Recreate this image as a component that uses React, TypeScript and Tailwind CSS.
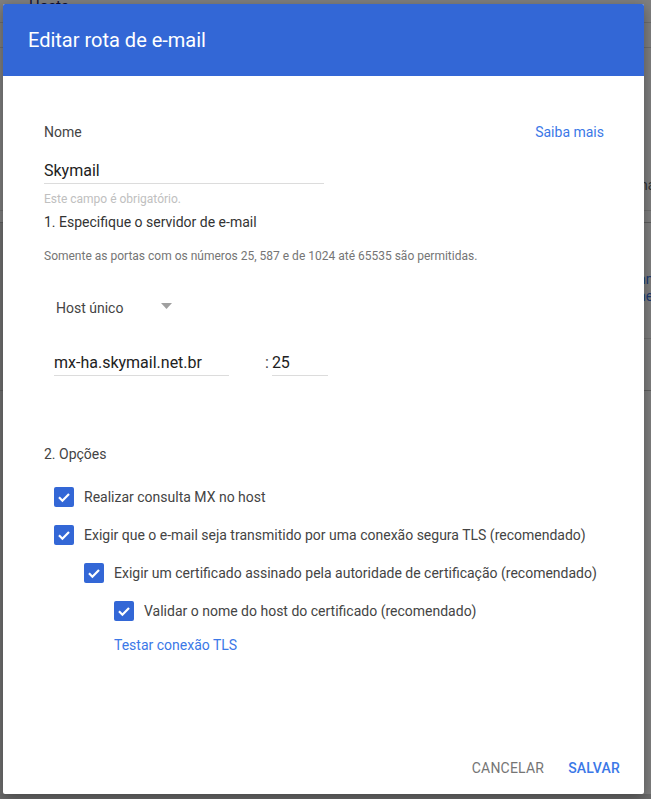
import React from "react";

const font = { fontFamily: "Roboto, 'Noto Sans', Arial, sans-serif" };

function Check({ ml }: { ml: string }) {
  return (
    <div
      className={`${ml} w-[20px] h-[20px] rounded-[2px] bg-[#3367d6] flex items-center justify-center shrink-0`}
    >
      <svg width="20" height="20" viewBox="0 0 20 20">
        <path d="M5 10.3l3.4 3.4 6.6-6.8" fill="none" stroke="#ffffff" strokeWidth="2.2" />
      </svg>
    </div>
  );
}

function CheckRow({
  ml,
  text,
  gap,
  mt,
}: {
  ml: string;
  text: string;
  gap: string;
  mt: string;
}) {
  return (
    <div className={`${mt} flex items-center h-[20px]`}>
      <Check ml={ml} />
      <span className={`${gap} text-[14px] leading-[20px] text-[#444444]`}>{text}</span>
    </div>
  );
}

export default function App() {
  return (
    <div className="relative w-[651px] h-[799px] bg-[#7f7f7f] overflow-hidden" style={font}>
      {/* dimmed page behind the overlay */}
      <div className="absolute inset-0">
        <div className="absolute left-[12px] top-[2px] text-[10px] leading-[10px] text-[#3a3a3a]">▸</div>
        <div className="absolute left-[29px] top-[-2px] text-[15px] leading-[16px] text-[#0f0f30]">Hosts</div>
        <div className="absolute left-[0px] top-[22px] w-[651px] h-px bg-[#6e6e6e]" />
        <div className="absolute left-[0px] top-[47px] w-[651px] h-px bg-[#6e6e6e]" />
        <div className="absolute left-[0px] top-[222px] w-[651px] h-px bg-[#5f5f5f]" />
        <div className="absolute left-[0px] top-[223px] w-[10px] h-[576px] bg-[#707070]" />
        <div className="absolute left-[640px] top-[176px] text-[14px] leading-[18px] text-[#333333]">na</div>
        <div className="absolute left-[0px] top-[210px] w-[651px] h-px bg-[#707070]" />
        <div className="absolute left-[638px] top-[270px] text-[14px] leading-[18px] text-[#1c3a70]">nm</div>
        <div className="absolute left-[638px] top-[287px] text-[14px] leading-[18px] text-[#1c3a70]">ne</div>
        <div className="absolute left-[0px] top-[338px] w-[651px] h-px bg-[#707070]" />
        <div className="absolute left-[0px] top-[390px] w-[651px] h-px bg-[#606060]" />
        <div className="absolute left-[0px] top-[794px] w-[651px] h-[5px] bg-[#6b6b6b]" />
      </div>

      {/* dialog */}
      <div className="absolute left-[3px] top-[4px] w-[641px] h-[790px] bg-white rounded-[2px] shadow-[0_4px_14px_rgba(0,0,0,0.35)] flex flex-col overflow-hidden">
        <div className="h-[72px] bg-[#3367d6] flex items-center pl-[25px] shrink-0">
          <span className="text-[20px] leading-[28px] text-white">Editar rota de e-mail</span>
        </div>

        <div className="flex-1 flex flex-col pl-[41px] pr-[40px]">
          <div className="mt-[46px] flex items-center justify-between h-[20px]">
            <span className="text-[14px] leading-[20px] text-[#444444]">Nome</span>
            <span className="text-[14px] leading-[20px] text-[#3b78e7]">Saiba mais</span>
          </div>

          <div className="mt-[17px] w-[280px] h-[25px] border-b border-[#dcdcdc]">
            <span className="text-[16px] leading-[24px] text-[#212121]">Skymail</span>
          </div>

          <div className="mt-[7px] text-[12px] leading-[16px] text-[#c0c0c0]">
            Este campo é obrigatório.
          </div>

          <div className="mt-[5px] text-[14px] leading-[20px] text-[#333333]">
            1. Especifique o servidor de e-mail
          </div>

          <div className="mt-[16px] text-[12px] leading-[16px] text-[#757575]">
            Somente as portas com os números 25, 587 e de 1024 até 65535 são permitidas.
          </div>

          <div className="mt-[34px] ml-[12px] w-[116px] h-[20px] flex items-center justify-between">
            <span className="text-[14px] leading-[20px] text-[#444444]">Host único</span>
            <svg width="11" height="6" viewBox="0 0 11 6" className="mb-[4px]">
              <path d="M0 0h11L5.5 6z" fill="#a0a0a0" />
            </svg>
          </div>

          <div className="mt-[33px] flex items-start">
            <div className="ml-[10px] w-[175px] h-[25px] border-b border-[#dcdcdc]">
              <span className="text-[16px] leading-[24px] text-[#212121]">mx-ha.skymail.net.br</span>
            </div>
            <span className="ml-[36px] text-[16px] leading-[24px] text-[#444444]">:</span>
            <div className="ml-[3px] w-[56px] h-[25px] border-b border-[#dcdcdc]">
              <span className="text-[16px] leading-[24px] text-[#212121]">25</span>
            </div>
          </div>

          <div className="mt-[68px] text-[14px] leading-[20px] text-[#444444]">2. Opções</div>

          <CheckRow mt="mt-[23px]" ml="ml-[10px]" gap="ml-[10px]" text="Realizar consulta MX no host" />
          <CheckRow
            mt="mt-[18px]"
            ml="ml-[10px]"
            gap="ml-[10px]"
            text="Exigir que o e-mail seja transmitido por uma conexão segura TLS (recomendado)"
          />
          <CheckRow
            mt="mt-[18px]"
            ml="ml-[40px]"
            gap="ml-[10px]"
            text="Exigir um certificado assinado pela autoridade de certificação (recomendado)"
          />
          <CheckRow
            mt="mt-[18px]"
            ml="ml-[70px]"
            gap="ml-[10px]"
            text="Validar o nome do host do certificado (recomendado)"
          />

          <div className="mt-[14px] ml-[70px] text-[14px] leading-[20px] text-[#3b78e7]">
            Testar conexão TLS
          </div>
        </div>

        <div className="h-[36px] flex items-start justify-end pr-[24px] gap-[24px] shrink-0">
          <span className="text-[14px] leading-[20px] text-[#757575] tracking-[0.2px]">CANCELAR</span>
          <span className="text-[14px] leading-[20px] text-[#3b78e7] font-medium tracking-[0.2px]">SALVAR</span>
        </div>
      </div>
    </div>
  );
}
